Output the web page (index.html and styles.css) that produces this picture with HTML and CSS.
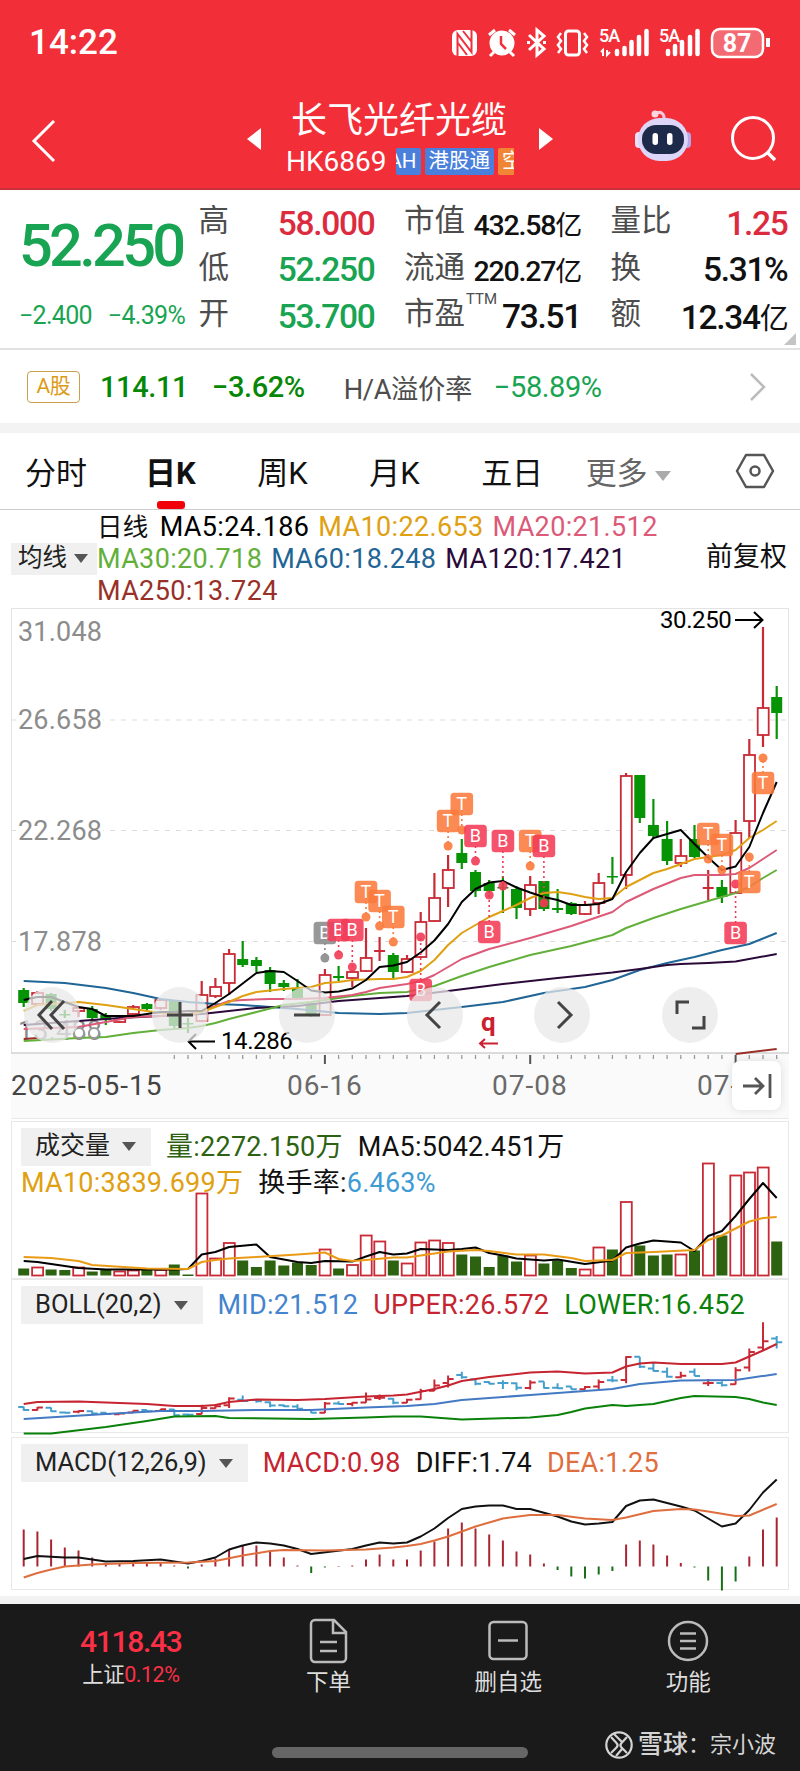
FILE: index.html
```
<!DOCTYPE html>
<html lang="zh-CN">
<head>
    <meta charset="UTF-8">
    <meta name="viewport" content="width=device-width, initial-scale=1.0">
    <title>长飞光纤光缆 HK6869</title>
    <link rel="stylesheet" href="styles.css">
</head>
<body>
    <header class="header">
        <div class="status-bar">
            <span class="clock">14:22</span>
            <svg class="status-icons" width="324" height="36" viewBox="448 25 324 36">
                <!-- NFC -->
                <rect x="452" y="30" width="25" height="26" rx="6" fill="#fff"/>
                <path d="M457.500 56V34l14 18V30M463 31l8 10M458 43l9 12" stroke="#f0303a" stroke-width="2" fill="none"/>
                <!-- alarm -->
                <circle cx="502" cy="43" r="12.500" fill="#fff"/>
                <path d="M489 35l6-5M515 35l-6-5M494 52l-4 4M510 52l4 4" stroke="#fff" stroke-width="3"/>
                <path d="M501 36v8l5 5" stroke="#f0303a" stroke-width="2.500" fill="none"/>
                <!-- bluetooth -->
                <path d="M529 35l15 14-7 6V30l7 6-15 14M527 42.500h3M543 42.500h3" stroke="#fff" stroke-width="3" fill="none"/>
                <!-- vibrate -->
                <rect x="565.500" y="31" width="14" height="24" rx="3" stroke="#fff" stroke-width="3" fill="none"/>
                <path d="M561 33l-3 4 3 4-3 4 3 4-3 4M584 33l3 4-3 4 3 4-3 4 3 4" stroke="#fff" stroke-width="2.500" fill="none"/>
                <!-- signal -->
                <text x="599" y="42" class="net">5A</text>
                <text x="659" y="42" class="net">5A</text>
                <path d="M603 56v-6l-2 2M607 50v5l3-3" stroke="#fff" stroke-width="2" fill="none"/>
                <path d="M617 54v-3M624.500 54v-6M631.500 54V42M639 54V37M646.500 54V31M668 54v-3M675 54v-8M682 54V42M690 54V37M697.500 54V31" stroke="#fff" stroke-width="4.500" stroke-linecap="round"/>
                <!-- battery -->
                <rect x="712" y="29" width="51" height="28" rx="8" fill="#f46a72" stroke="#fff" stroke-width="2.500"/>
                <path d="M768 38v9" stroke="#fff" stroke-width="4"/>
                <text x="737" y="52" class="battery">87</text>
            </svg>
        </div>
        <div class="title-bar">
            <svg class="back" width="26" height="44" viewBox="0 0 26 44"><path d="M23 2L3 22l20 20" stroke="#fff" stroke-width="3" fill="none"/></svg>
            <span class="arrow-left"></span>
            <div class="stock">
                <div class="stock-name">长飞光纤光缆</div>
                <div class="stock-code">
                    <span>HK6869</span>
                    <div class="tags">
                        <span class="tag tag-ah">AH</span>
                        <span class="tag">港股通</span>
                        <span class="tag tag-orange">空</span>
                    </div>
                </div>
            </div>
            <span class="arrow-right"></span>
            <svg class="robot" width="56" height="54" viewBox="0 0 56 54">
                <path d="M20 5c6-4 10 0 9 7" stroke="#f6c9d8" stroke-width="3" fill="none"/>
                <circle cx="20" cy="5" r="3.500" fill="#fbd6dd"/>
                <rect x="0" y="23" width="8" height="16" rx="4" fill="#ece0f7"/>
                <rect x="48" y="23" width="8" height="16" rx="4" fill="#b9a5ea"/>
                <rect x="3" y="9" width="50" height="43" rx="21.500" fill="#ddd6f8"/>
                <rect x="7" y="16" width="42" height="29" rx="14" fill="#1d2a4a"/>
                <rect x="17.500" y="24" width="5.500" height="12" rx="2.700" fill="#fff"/>
                <rect x="32" y="24" width="5.500" height="12" rx="2.700" fill="#fff"/>
            </svg>
            <svg class="search" width="48" height="48" viewBox="0 0 48 48"><circle cx="23" cy="23" r="20.500" stroke="#fff" stroke-width="3" fill="none"/><path d="M37 37l8 8" stroke="#fff" stroke-width="3.500"/></svg>
        </div>
    </header>

    <section class="quote">
        <div class="quote-price">
            <div class="price">52.250</div>
            <div class="change"><span>−2.400</span><span>−4.39%</span></div>
        </div>
        <dl class="stats">
            <div><dt>高</dt><dd class="red">58.000</dd></div>
            <div><dt>低</dt><dd class="green">52.250</dd></div>
            <div><dt>开</dt><dd class="green">53.700</dd></div>
        </dl>
        <dl class="stats">
            <div><dt>市值</dt><dd class="small">432.58<span>亿</span></dd></div>
            <div><dt>流通</dt><dd class="small">220.27<span>亿</span></dd></div>
            <div><dt>市盈<sup>TTM</sup></dt><dd>73.51</dd></div>
        </dl>
        <dl class="stats">
            <div><dt>量比</dt><dd class="red">1.25</dd></div>
            <div><dt>换</dt><dd>5.31%</dd></div>
            <div><dt>额</dt><dd>12.34<span>亿</span></dd></div>
        </dl>
    </section>

    <section class="a-share">
        <span class="a-tag">A股</span>
        <span class="a-price">114.11</span>
        <span class="a-change">−3.62%</span>
        <span class="a-label">H/A溢价率</span>
        <span class="a-premium">−58.89%</span>
        <svg class="more-arrow" width="18" height="30" viewBox="0 0 18 30"><path d="M2 2l13 13L2 28" stroke="#bbb" stroke-width="2.500" fill="none"/></svg>
    </section>

    <nav class="tabs">
        <span>分时</span>
        <span class="active">日K</span>
        <span>周K</span>
        <span>月K</span>
        <span>五日</span>
        <span class="more">更多<i class="caret"></i></span>
        <svg width="40" height="36" viewBox="0 0 40 36"><path d="M11 2h18l9 16-9 16H11L2 18z" stroke="#555" stroke-width="2.500" stroke-linejoin="round" fill="none"/><circle cx="20" cy="18" r="4.500" stroke="#555" stroke-width="2.500" fill="none"/></svg>
    </nav>

    <section class="ma-legend">
        <div class="select ma-select">均线<i class="caret"></i></div>
        <div class="ma-values">
            <div><span>日线</span><span class="ma5">MA5:24.186</span><span class="ma10">MA10:22.653</span><span class="ma20">MA20:21.512</span></div>
            <div><span class="ma30">MA30:20.718</span><span class="ma60">MA60:18.248</span><span class="ma120">MA120:17.421</span></div>
            <div><span class="ma250">MA250:13.724</span></div>
        </div>
        <div class="adjust">前复权</div>
    </section>

    <section class="kline">
        <svg id="kline" width="800" height="457" viewBox="0 608 800 457"></svg>
        <div class="tools">
            <span><svg width="56" height="56"><path d="M28 14L15 28l13 14M40 14L27 28l13 14"/></svg></span>
            <span><svg width="56" height="56"><path d="M15 28h26M28 15v26"/></svg></span>
            <span><svg width="56" height="56"><path d="M15 28h26"/></svg></span>
            <span><svg width="56" height="56"><path d="M33 15L20 28l13 13"/></svg></span>
            <span><svg width="56" height="56"><path d="M24 15l13 13-13 13"/></svg></span>
            <span><svg width="56" height="56"><path d="M15 27V15h12M30 41h12V29"/></svg></span>
        </div>
    </section>
    <div class="axis">
        <span class="date-start">2025-05-15</span>
        <span class="date-mid">06-16</span>
        <span class="date-mid2">07-08</span>
        <span class="date-end">07-</span>
        <div class="to-end"><svg width="30" height="28" viewBox="0 0 30 28"><path d="M1 14h20M13 6l8 8-8 8M28 2v24" stroke="#555" stroke-width="2.800" fill="none"/></svg></div>
    </div>

    <section class="panel volume">
        <div class="legend">
            <div class="select">成交量<i class="caret"></i></div>
            <span class="vol">量:2272.150万</span><span>MA5:5042.451万</span>
        </div>
        <div class="legend second"><span class="ma10">MA10:3839.699万</span><span>换手率:<b>6.463%</b></span></div>
        <svg id="volume" width="800" height="158" viewBox="0 1120 800 158"></svg>
    </section>

    <section class="panel boll">
        <div class="legend">
            <div class="select">BOLL(20,2)<i class="caret"></i></div>
            <span class="mid">MID:21.512</span><span class="upper">UPPER:26.572</span><span class="lower">LOWER:16.452</span>
        </div>
        <svg id="boll" width="800" height="158" viewBox="0 1278 800 158"></svg>
    </section>

    <section class="panel macd">
        <div class="legend">
            <div class="select">MACD(12,26,9)<i class="caret"></i></div>
            <span class="upper">MACD:0.98</span><span>DIFF:1.74</span><span class="dea">DEA:1.25</span>
        </div>
        <svg id="macd" width="800" height="158" viewBox="0 1436 800 158"></svg>
    </section>

    <footer class="footer">
        <div class="menu">
            <div class="index">
                <div class="index-value">4118.43</div>
                <div class="index-name">上证<span>0.12%</span></div>
            </div>
            <div class="menu-item">
                <svg width="44" height="46" viewBox="0 0 44 46"><path d="M8 2h19l12 12v26a4 4 0 0 1-4 4H8a4 4 0 0 1-4-4V6a4 4 0 0 1 4-4zM26 2v13h13M13 24h17M13 33h17"/></svg>
                下单
            </div>
            <div class="menu-item">
                <svg width="44" height="46" viewBox="0 0 44 46"><rect x="3.500" y="4" width="37" height="37" rx="4"/><path d="M12 22.500h20"/></svg>
                删自选
            </div>
            <div class="menu-item">
                <svg width="44" height="46" viewBox="0 0 44 46"><circle cx="22" cy="23" r="19"/><path d="M14 15.500h16M14 23h16M14 30.500h16"/></svg>
                功能
            </div>
        </div>
        <div class="home-bar"></div>
        <div class="watermark">
            <svg width="28" height="28" viewBox="0 0 28 28"><circle cx="14" cy="14" r="12.700"/><path d="M6 6l5.500 6c1.500 1.500 1.500 3 0 4.500L6 22M22 6l-5.500 6c-1.500 1.500-1.500 3 0 4.500L22 22M9 3l8 8M11 25l6-7"/></svg>
            <b>雪球</b>：宗小波
        </div>
    </footer>

    <script src="chart.js"></script>
</body>
</html>
```
FILE: styles.css
```
* {
    box-sizing: border-box;
}

body {
    margin: 0;
    width: 800px;
    height: 1771px;
    overflow: hidden;
    background: #fff;
    color: #111;
    font-family: Roboto, "Noto Sans CJK SC", sans-serif;
    font-size: 27px;
    white-space: nowrap;
}

.header {
    height: 190px;
    background: #f22f38;
    border-bottom: 2px solid #c9303a;
    color: #fff;
}

.status-bar {
    height: 85px;
    padding: 0 28px 0 29px;
    display: flex;
    justify-content: space-between;
    align-items: center;
}

.clock {
    font-size: 35px;
    font-weight: 500;
}

.net {
    fill: #fff;
    font-size: 18px;
    font-weight: 500;
    letter-spacing: -1px;
}

.battery {
    fill: #fff;
    font-size: 25px;
    font-weight: 700;
    text-anchor: middle;
}

.title-bar {
    height: 103px;
    padding: 0 22px 0 31px;
    display: flex;
    align-items: center;
}

.back {
    margin-top: 8px;
}

.arrow-left,
.arrow-right {
    border: 11px solid transparent;
    margin-top: 5px;
}

.arrow-left {
    border-right: 14px solid #fff;
    border-left: 0;
    margin-left: 190px;
}

.arrow-right {
    border-left: 14px solid #fff;
    border-right: 0;
    margin-left: 24px;
}

.stock {
    width: 229px;
    margin-left: 25px;
}

.stock-name {
    font-size: 36px;
    line-height: 50px;
    padding-left: 5px;
}

.stock-code {
    display: flex;
    align-items: center;
    font-size: 28px;
    line-height: 32px;
}

.tags {
    display: flex;
    gap: 4px;
    width: 118px;
    margin-left: 9px;
    overflow: hidden;
}

.tag {
    flex: none;
    height: 27px;
    padding: 0 4px;
    border-radius: 2px;
    background: #4a7fdc;
    font-size: 20.500px;
    line-height: 26px;
}

.tag-ah {
    width: 25px;
    display: flex;
    justify-content: flex-end;
}

.tag-orange {
    background: #ef8535;
}

.robot {
    margin: 0 0 2px 82px;
}

.search {
    margin-left: auto;
    margin-top: 4px;
}

.quote {
    position: relative;
    height: 160px;
    padding: 10px 12px 0 19px;
    display: grid;
    grid-template-columns: 150px 176px 177px 177px;
    column-gap: 29.500px;
    border-bottom: 2px solid #e2e2e2;
}

.quote::after {
    content: "";
    position: absolute;
    right: 4px;
    bottom: 3px;
    border-left: 12px solid transparent;
    border-bottom: 12px solid #c4c4c4;
}

.stats {
    margin: 0;
}

.stats div {
    height: 46.500px;
    display: flex;
    align-items: center;
    justify-content: space-between;
}

.stats dt {
    position: relative;
    color: #4d4d4d;
    font-size: 30.500px;
    line-height: 46px;
    margin-top: -4px;
}

.stats sup {
    position: absolute;
    top: 1px;
    left: 62px;
    font-size: 15px;
    line-height: 15px;
}

.stats dd {
    margin: 0;
    font-size: 33.500px;
    font-weight: 500;
    letter-spacing: -1.300px;
}

.stats dd span {
    font-weight: 400;
    font-size: 29px;
}

.stats dd.small {
    font-size: 28.500px;
    letter-spacing: -1.200px;
}

.stats dd.small span {
    font-size: 27px;
}

.quote .stats:first-of-type {
    margin-left: 0;
}

.quote-price {
    color: #18a452;
}

.price {
    font-size: 59.500px;
    font-weight: 500;
    letter-spacing: -3.700px;
    line-height: 92px;
}

.change {
    display: flex;
    justify-content: space-between;
    width: 166px;
    margin-top: 8px;
    font-size: 25px;
    letter-spacing: -0.700px;
    line-height: 32px;
}

.stats dd.red {
    color: #dc2b3e;
}

.stats dd.green {
    color: #18a452;
}

.a-share {
    height: 73px;
    display: flex;
    align-items: center;
    padding: 0 33px 0 27px;
    font-size: 29px;
    letter-spacing: -0.400px;
}

.a-tag {
    width: 53px;
    height: 32px;
    border: 1px solid #c9a04c;
    border-radius: 4px;
    color: #dc9a17;
    font-size: 21px;
    line-height: 29px;
    text-align: center;
}

.a-price {
    margin-left: 20px;
    width: 112px;
}

.a-price,
.a-change {
    color: #078707;
    font-weight: 500;
}

.a-label {
    margin-left: 39px;
    color: #4d4d4d;
    font-size: 27.300px;
}

.a-premium {
    margin-left: 22px;
    color: #18a452;
}

.more-arrow {
    margin-left: auto;
}

.tabs {
    height: 87px;
    padding: 0 25px;
    display: flex;
    align-items: center;
    border-top: 10px solid #f3f3f3;
    border-bottom: 1px solid #ccc;
    font-size: 31px;
}

.tabs span {
    height: 76px;
    line-height: 81px;
    margin-right: 61.500px;
    flex: none;
}

.tabs span:first-child {
    margin-right: 58px;
}

.tabs .active {
    position: relative;
    font-weight: 700;
}

.tabs .active::after {
    content: "";
    position: absolute;
    left: 12px;
    bottom: 0;
    width: 28px;
    height: 8px;
    border-radius: 3px;
    background: #f20009;
}

.tabs .more {
    margin-right: auto;
    margin-left: -19px;
    color: #666;
}

.caret {
    display: inline-block;
    border: 7px solid transparent;
    border-top: 9px solid #555;
    border-bottom: 0;
    vertical-align: 3px;
    margin-left: 12px;
}

.tabs .caret {
    border-width: 10px 8px 0;
    border-top-color: #aaa;
    margin-left: 7px;
}

.select {
    background: #f0f0f0;
    color: #222;
}

.ma-legend {
    height: 98px;
    padding: 0 13px 0 11px;
    display: flex;
    align-items: center;
}

.ma-select {
    width: 86px;
    height: 32px;
    padding-left: 7px;
    font-size: 24.500px;
    line-height: 30px;
}

.ma-select .caret {
    margin-left: 7px;
}

.ma-values div {
    display: flex;
    gap: 9px;
    line-height: 32px;
    letter-spacing: 0.350px;
}

.ma-values div:first-child span:first-child {
    font-size: 25.500px;
    margin-right: 2px;
}

.adjust {
    margin-left: auto;
    line-height: 30px;
    margin-top: -5px;
}

.ma5 { color: #000; }
.ma10 { color: #dfa012; }
.ma20 { color: #dc5a78; }
.ma30 { color: #62b03a; }
.ma60 { color: #1f6596; }
.ma120 { color: #2b0a3a; }
.ma250 { color: #983028; }
.vol { color: #2d6210; }
.mid { color: #4484cf; }
.upper { color: #c52430; }
.lower { color: #0a810a; }
.dea { color: #df6e3e; }

.kline {
    position: relative;
    height: 445px;
}

.kline svg {
    display: block;
}

#kline text {
    font-size: 27px;
    fill: #8c8c8c;
    letter-spacing: 0.200px;
}

#kline .peak {
    font-size: 24px;
    fill: #000;
    letter-spacing: -0.400px;
}

#kline .badge {
    font-size: 18px;
    font-weight: 400;
    fill: #fff;
    text-anchor: middle;
}

#kline .event {
    font-size: 26px;
    font-weight: 700;
    fill: #cb2030;
}

.tools {
    position: absolute;
    left: 24px;
    bottom: 10px;
    display: flex;
    gap: 71.500px;
}

.tools span {
    width: 56px;
    height: 56px;
    border-radius: 50%;
    background: rgba(232, 232, 232, 0.75);
}

.tools path {
    fill: none;
    stroke: #444;
    stroke-width: 3;
}

.axis {
    height: 66px;
    margin: 0 11px;
    background: #fafafa;
    border-bottom: 1px solid #e8e8e8;
    display: flex;
    align-items: center;
    color: #6a6a6a;
    font-size: 28px;
    letter-spacing: 1px;
}

.axis span {
    flex: none;
}

.date-start {
    width: 276px;
    color: #444;
}

.date-mid {
    width: 205px;
}

.date-mid2 {
    width: 205px;
}

.date-end {
    width: 33px;
}

.to-end {
    position: relative;
    width: 49px;
    height: 49px;
    margin-left: 2px;
    border-radius: 8px;
    background: #fff;
    box-shadow: 0 0 8px rgba(0, 0, 0, 0.12);
    display: flex;
    align-items: center;
    justify-content: center;
}

.panel {
    position: relative;
    height: 154px;
    margin: 0 11px 4px;
    border: 1px solid #e8e8e8;
}

.panel svg {
    position: absolute;
    left: -12px;
    top: -2px;
}

.volume {
    height: 158px;
    margin: 2px 11px 0;
}

.legend {
    display: flex;
    align-items: center;
    height: 38px;
    margin: 6px 0 0 9px;
    gap: 15px;
    letter-spacing: 0.250px;
}

.legend .select {
    height: 38px;
    padding: 0 15px 0 14px;
    font-size: 25.500px;
    line-height: 36px;
    letter-spacing: 0;
}

.legend .caret {
    margin-left: 12px;
}

.volume .select {
    font-size: 25px;
}

.volume span {
    margin-top: -5px;
}

.second {
    height: 36px;
    margin-top: -1px;
}

.second b {
    color: #3f9bd2;
    font-weight: 400;
}

.macd {
    height: 153px;
    margin-bottom: 6px;
}

.footer {
    position: relative;
    height: 176px;
    border-top: 8px solid #f3f3f3;
    background: #1a1a1a;
}

.menu {
    display: flex;
    padding: 14px 22px 0 23px;
    color: #ddd;
}

.index {
    width: 216px;
    padding-top: 7px;
    text-align: center;
}

.index-value {
    color: #fb3046;
    font-size: 30px;
    font-weight: 500;
    letter-spacing: -1.300px;
    line-height: 34px;
}

.index-name {
    font-size: 21.500px;
    line-height: 31px;
    letter-spacing: -0.500px;
}

.index-name span {
    color: #fb3046;
}

.menu-item {
    width: 180px;
    display: flex;
    flex-direction: column;
    align-items: center;
    font-size: 22.500px;
    line-height: 36px;
}

.menu-item svg {
    fill: none;
    stroke: #bbb;
    stroke-width: 2.500;
}

.home-bar {
    position: absolute;
    left: 272px;
    bottom: 14px;
    width: 256px;
    height: 11px;
    border-radius: 6px;
    background: #666;
}

.watermark {
    position: absolute;
    right: 24px;
    bottom: 10px;
    display: flex;
    align-items: center;
    color: #d4d4d4;
    font-size: 22px;
    line-height: 34px;
}

.watermark b {
    font-size: 25px;
    font-weight: 500;
    margin-left: 5px;
}

.watermark svg {
    fill: none;
    stroke: #d4d4d4;
    stroke-width: 2.200;
}
```
FILE: chart.js
```
var STEP = 13.69;
var RED = "#c92a35";
var GREEN = "#069306";

// up/down, high, body top, body bottom, low
var candles = [
    ["g", 988, 990, 1003, 1007], ["r", 991, 993, 1004, 1005], ["g", 993, 994, 1009, 1011], ["g", 1010, 1014, 1015, 1018],
    ["r", 1006, 1008, 1011, 1017], ["g", 1006, 1009, 1018, 1020], ["g", 1013, 1015, 1020, 1025], ["r", 1018, 1019, 1022, 1023],
    ["r", 1005, 1007, 1014, 1015], ["g", 1003, 1004, 1009, 1010], ["r", 999, 1000, 1008, 1010], ["g", 1000, 1001, 1026, 1028],
    ["g", 1018, 1023, 1024, 1033], ["r", 981, 995, 1021, 1022], ["r", 978, 987, 996, 998], ["r", 949, 954, 983, 995],
    ["g", 941, 959, 965, 967], ["g", 957, 960, 966, 972], ["g", 967, 970, 984, 992], ["g", 980, 983, 987, 991],
    ["g", 979, 988, 998, 1000], ["g", 1002, 1003, 1015, 1017], ["r", 969, 975, 1015, 1016], ["g", 966, 976, 978, 981],
    ["r", 970, 972, 978, 987], ["r", 928, 958, 971, 972], ["r", 937, 951, 952, 961], ["g", 953, 955, 972, 979],
    ["r", 955, 959, 972, 973], ["r", 912, 922, 957, 958], ["r", 873, 898, 921, 922], ["r", 855, 870, 888, 907],
    ["g", 839, 853, 863, 869], ["g", 870, 872, 891, 897], ["g", 880, 883, 891, 893], ["g", 876, 887, 888, 913],
    ["g", 886, 889, 908, 919], ["r", 876, 885, 909, 916], ["g", 881, 881, 909, 911], ["g", 889, 908, 910, 913],
    ["g", 902, 903, 914, 915], ["r", 901, 905, 914, 915], ["r", 873, 883, 903, 914], ["g", 857, 876, 877, 884],
    ["r", 773, 776, 875, 889], ["g", 775, 775, 818, 823], ["g", 799, 825, 836, 838], ["g", 821, 839, 861, 865],
    ["r", 839, 856, 863, 867], ["g", 825, 839, 857, 858], ["r", 870, 888, 889, 900], ["g", 880, 887, 897, 903],
    ["r", 820, 833, 893, 894], ["r", 739, 755, 821, 838], ["r", 627, 708, 735, 747], ["g", 686, 697, 713, 739]
];

var volumes = [7, 8, 6, 5.5, 8, 4, 5.5, 4, 5, 5.5, 5.5, 11, 1, 82, 17, 32.5, 15, 8.5, 15, 10, 13, 10.5, 26, 7, 10.5, 40, 34, 15,
    12, 33, 35, 32.5, 21, 19, 8.5, 20, 14, 20, 12, 15, 7.5, 6, 28, 26, 73.5, 30, 20, 21, 21, 25, 112, 40, 100, 103, 108, 34];

var macd = [37, 35, 27, 19, 16, 9, 3, 3, 3, 4, 4, 1, -2, 2, 8, 17, 21, 21, 16, 9, 1, -6.5, -1, 0.5, 1, 7, 12, 7,
    7, 16, 25, 38, 44, 38, 32, 26, 15, 12, 3, -3.5, -10, -12, -8, -4.5, 22, 26, 22, 11, 3.5, -1, -14, -24, -15, 10, 37, 49];

// letter, candle, badge y, dot y, colour
var markers = [
    ["B", 22, 933, 958, "#8a8a8a"], ["B", 23, 930, 955, "#f23b57"], ["B", 24, 930, 967, "#f23b57"],
    ["T", 25, 892, 917, "#fb7a3c"], ["T", 26, 901, 926, "#fb7a3c"], ["T", 27, 917, 942, "#fb7a3c"],
    ["B", 29, 990, 937, "#f23b57"], ["T", 31, 821, 846, "#fb7a3c"], ["T", 32, 804, 830, "#fb7a3c"],
    ["B", 33, 836, 861, "#f23b57"], ["B", 34, 932, 895, "#f23b57"], ["B", 35, 841, 886, "#f23b57"],
    ["T", 37, 841, 866, "#fb7a3c"], ["B", 38, 846, 903, "#f23b57"], ["T", 50, 834, 859, "#fb7a3c"],
    ["T", 51, 845, 870, "#fb7a3c"], ["B", 52, 933, 884, "#f23b57"], ["T", 53, 882, 857, "#fb7a3c"],
    ["T", 54, 783, 758, "#fb7a3c"]
];

function x(i) {
    return Math.round((23.7 + STEP * i) * 10) / 10;
}

function path(d, color, width, extra) {
    return '<path d="' + d + '" fill="none" stroke="' + color + '" stroke-width="' + width + '" ' + (extra || "") + '/>';
}

function line(points, color) {
    var d = points.map(function (p, n) {
        return (n ? "L" : "M") + x(p[0]) + " " + p[1];
    }).join("");
    return path(d, color, 2, 'stroke-linejoin="round"');
}

function bar(i, top, bottom, up, upColor, downColor) {
    if (!up) {
        return '<rect x="' + (x(i) - 5.5) + '" y="' + top + '" width="11" height="' + Math.max(bottom - top, 1.5) + '" fill="' + downColor + '"/>';
    }
    if (bottom - top < 2) {
        return path("M" + (x(i) - 5.5) + " " + top + "h11", upColor, 2);
    }
    return '<rect x="' + (x(i) - 5.3) + '" y="' + top + '" width="11" height="' + (bottom - top) + '" fill="#fff" stroke="' + upColor + '" stroke-width="1.8"/>';
}

function drawKline() {
    var out = path("M11.500 1053V608.500H788.500V1053", "#e3e3e3", 1) + path("M11 1053H789", "#bbb", 1);
    out += path("M11 720H789M11 830.500H789M11 941.500H789", "#ddd", 1, 'stroke-dasharray="5 6"');
    [["31.048", 641], ["26.658", 729], ["22.268", 840], ["17.878", 951], ["13.488", 1040]].forEach(function (t) {
        out += '<rect x="17" y="' + (t[1] - 20) + '" width="86" height="20" fill="#fff"/><text x="18" y="' + t[1] + '">' + t[0] + '</text>';
    });

    candles.forEach(function (c, i) {
        var color = c[0] == "r" ? RED : GREEN;
        out += path("M" + x(i) + " " + c[1] + "V" + c[4], color, 2.2);
        out += bar(i, c[2], c[3], c[0] == "r", RED, GREEN);
    });

    out += line([[0, 981], [3, 983], [6, 988], [8, 993], [10, 999], [12, 1002], [14, 1004], [16, 1005], [18, 1007], [20, 1009], [23, 1013], [26, 1014], [28, 1013], [32, 1007], [35, 1002], [38, 993], [41, 987], [43, 980], [45, 970], [47, 963], [49, 957], [51, 950], [52, 947], [53, 944], [55, 933]], "#1f6596");
    out += line([[0, 1025], [4, 1021], [7, 1018], [10, 1016], [13, 1014], [17, 1008], [20, 1006], [23, 1001], [28, 996], [31, 991], [35, 984], [39, 978], [43, 972.5], [45, 969], [47, 965], [48, 964], [50, 963], [52, 961.5], [55, 954]], "#2b0a3a");
    out += line([[0, 1041], [4, 1038], [6, 1037], [8, 1033], [10, 1030], [12, 1028], [13, 1026], [14, 1023], [15, 1019], [17, 1012], [19, 1005], [21, 1002], [22, 1000], [24, 996], [26, 993], [28, 992], [30, 986], [32, 976], [34, 967], [37, 955], [40, 946], [43, 935], [44, 928], [46, 918], [48, 909], [50, 901], [52, 893], [53, 887], [54, 878], [55, 870]], "#62b03a");
    out += line([[0, 1029], [4, 1027], [6, 1022], [8, 1017], [10, 1016], [12, 1014], [13, 1011], [14, 1006], [15, 1001], [16, 1000], [18, 999], [20, 999], [22, 998], [24, 995], [25, 992], [26, 988], [28, 984], [29, 981], [30, 975], [31, 967], [32, 959], [34, 949], [37, 938], [40, 926], [43, 912], [44, 902], [46, 889], [48, 878], [49, 875], [51, 875], [52, 874], [53, 868], [54, 859], [55, 850]], "#dc5a78");
    out += line([[0, 1011], [1, 1005], [4, 1002], [6, 1005], [8, 1009], [10, 1013], [12, 1015], [13, 1012], [14, 1007], [15, 1002], [16, 996], [17, 992], [19, 989], [20, 988], [21, 987], [22, 983], [23, 982], [24, 980], [26, 979], [27, 979], [28, 977], [29, 971], [30, 960], [31, 945], [32, 933], [33, 925], [34, 917], [35, 911], [36, 905], [37, 898], [38, 893], [39, 892], [40, 894], [41, 897], [42, 899], [43, 898], [44, 887], [45, 880], [46, 873], [47, 869], [48, 864], [49, 859], [50, 857], [51, 855], [52, 850], [53, 838], [54, 830], [55, 821]], "#dfa012");
    var ma5 = [1000, 997, 997, 1002, 1007, 1009, 1016, 1016, 1016, 1014, 1012, 1012, 1011, 1011, 1003, 994, 983.5, 973, 971, 972, 981, 990.5, 992.5, 991.5, 988.5, 980, 967, 965.5, 962, 952.5, 940.5, 924, 902, 889, 882.5, 881, 887.5, 892.5, 897, 900, 905, 905, 904, 899, 872, 853, 838, 834, 830, 844, 857.5, 870, 866.5, 847, 813, 782];
    out += line(ma5.map(function (y, i) { return [i, y]; }), "#000");
    out += line([[0, 1039], [1, 1038]], "#983028") + line([[52, 1054], [55, 1049]], "#983028");

    markers.forEach(function (m) {
        var cx = x(m[1]);
        out += path("M" + cx + " " + m[2] + "V" + m[3], m[4], 1.6, 'stroke-dasharray="2 3"');
        out += '<circle cx="' + cx + '" cy="' + m[3] + '" r="4.500" fill="' + m[4] + '" fill-opacity="0.9"/>';
        out += '<rect x="' + (cx - 11.3) + '" y="' + (m[2] - 11.3) + '" width="22.600" height="22.600" rx="3.500" fill="' + m[4] + '" fill-opacity="0.88"/>';
        out += '<text class="badge" x="' + cx + '" y="' + (m[2] + 6.3) + '">' + m[0] + '</text>';
    });

    out += '<text class="peak" x="660" y="628">30.250</text>' + path("M735 620h27M754 612l8.500 8-8.500 8", "#000", 2);
    out += '<text class="peak" x="221" y="1049">14.286</text>' + path("M215 1041.500h-26M196 1034l-7.500 7.500 7.500 7.500", "#000", 2);
    out += '<text class="event" x="481" y="1031">q</text>' + path("M498 1043.500h-18M485 1039l-5 4.500 5 4.500", "#cb2030", 2);
    // circles under the lowest axis label
    out += '<g fill="#fff" stroke="#999" stroke-width="2"><circle cx="79" cy="1033" r="5"/><circle cx="94" cy="1033" r="5"/></g>';

    for (var i = 11; i < 56; i++) {
        var major = i == 22 || i == 37 || i == 52;
        out += path("M" + x(i) + " 1055v" + (major ? 9 : 4), major ? "#555" : "#999", major ? 2 : 1.3);
    }
    document.getElementById("kline").innerHTML = out;
}

function drawVolume() {
    var out = "";
    volumes.forEach(function (v, i) {
        out += bar(i, 1275.5 - v, 1275.5, candles[i][0] == "r", RED, "#2d6210");
    });
    out += line([[0, 1261], [1, 1262], [2, 1264], [3, 1266], [4, 1268], [6, 1269.5], [11, 1269.5], [12, 1269], [13, 1254.5], [14, 1252], [15, 1247], [17, 1244.5], [18, 1257], [20, 1262], [21, 1263], [22, 1261], [24, 1261.5], [25, 1256.5], [26, 1252], [27, 1254.5], [28, 1253.5], [29, 1249], [31, 1250], [32, 1249], [33, 1247.5], [34, 1253], [35, 1255.5], [36, 1258.5], [38, 1260.5], [39, 1259.5], [41, 1264], [43, 1260.5], [44, 1247.5], [45, 1243.5], [46, 1240.5], [48, 1242.5], [49, 1251], [50, 1236], [51, 1231], [52, 1216], [53, 1199], [54, 1183], [55, 1198]], "#000");
    out += line([[0, 1257], [2, 1258], [4, 1261], [5, 1265], [9, 1268.5], [12, 1269], [13, 1262], [14, 1260], [15, 1258.5], [17, 1257], [20, 1254.5], [22, 1252.5], [23, 1259], [24, 1261], [25, 1260], [27, 1257.5], [28, 1257.5], [31, 1251.5], [33, 1250], [34, 1251], [36, 1254.5], [38, 1254.5], [40, 1258], [41, 1261], [43, 1260], [44, 1253], [46, 1252], [49, 1250], [50, 1240], [51, 1235.5], [53, 1221.5], [54, 1218], [55, 1217]], "#ea9b16");
    document.getElementById("volume").innerHTML = out;
}

function drawBoll() {
    function scale(y) {
        return Math.round((1322.3 + (y - 627) * 0.233) * 10) / 10;
    }
    var out = "";
    candles.forEach(function (c, i) {
        var up = c[0] == "r";
        var open = scale(up ? c[3] : c[2]);
        var close = scale(up ? c[2] : c[3]);
        out += path("M" + (x(i) - 5.5) + " " + open + "H" + x(i) + "M" + x(i) + " " + scale(c[1]) + "V" + scale(c[4]) + "M" + x(i) + " " + close + "h5.500", up ? RED : "#459fce", 2);
    });
    out += line([[0, 1404], [1, 1402], [4, 1401.5], [7, 1403], [9, 1404], [11, 1406], [13, 1406], [14, 1405], [15, 1402], [17, 1399.5], [20, 1400], [22, 1399], [25, 1396.5], [27, 1395.5], [28, 1394.5], [30, 1389], [31, 1385.5], [32, 1381], [34, 1377], [37, 1372.5], [39, 1371.5], [41, 1373.5], [43, 1372.5], [44, 1366.5], [45, 1363.5], [46, 1362.5], [48, 1364], [51, 1364], [52, 1362.5], [53, 1356.5], [54, 1350.5], [55, 1344]], "#c52430");
    out += line([[0, 1419], [6, 1414], [10, 1411], [13, 1411], [17, 1410], [21, 1410], [25, 1407.5], [28, 1406], [30, 1404], [32, 1400], [37, 1395], [43, 1389], [45, 1384], [48, 1380.5], [52, 1380], [55, 1374]], "#4479c4");
    out += line([[0, 1433.5], [2, 1433.5], [6, 1427], [9, 1421], [11, 1416.5], [14, 1416], [15, 1418], [21, 1419], [25, 1417.5], [27, 1416.5], [29, 1416.5], [32, 1419.5], [37, 1417.5], [39, 1415], [40, 1412], [41, 1408.5], [43, 1405], [44, 1406], [46, 1404], [48, 1398], [49, 1396], [52, 1397], [53, 1399], [54, 1402.5], [55, 1405]], "#0a810a");
    document.getElementById("boll").innerHTML = out;
}

function drawMacd() {
    var out = "";
    macd.forEach(function (v, i) {
        out += path("M" + x(i) + " 1566.500v" + (-v), v > 0 ? "#a82632" : "#176f17", 2);
    });
    out += line([[0, 1559], [1, 1556], [3, 1557.5], [4, 1557.5], [6, 1561.5], [8, 1561], [10, 1559.5], [12, 1563.5], [13, 1561], [14, 1557.5], [15, 1549.5], [16, 1545.5], [17, 1542.5], [18, 1543.5], [19, 1545.5], [20, 1549], [21, 1554], [24, 1549], [25, 1545.5], [26, 1542.5], [27, 1543.5], [28, 1542.5], [29, 1536.5], [30, 1528.5], [31, 1518], [32, 1509], [33, 1506.5], [34, 1505.5], [35, 1505.5], [36, 1509], [37, 1509], [39, 1516.5], [40, 1521.5], [41, 1524.5], [42, 1523.5], [43, 1522], [44, 1506], [45, 1500.5], [46, 1499.5], [48, 1506.5], [49, 1510.5], [50, 1518.5], [51, 1526.5], [52, 1523.5], [53, 1510], [54, 1492.5], [55, 1479.5]], "#111");
    out += line([[0, 1577.5], [1, 1573], [2, 1569.5], [3, 1566.5], [5, 1564.5], [8, 1563], [12, 1562.5], [14, 1561], [16, 1555.5], [18, 1551], [19, 1550], [22, 1550.5], [25, 1549.5], [27, 1547.5], [28, 1546], [29, 1544], [30, 1540.5], [31, 1536.5], [33, 1526.5], [35, 1518.5], [37, 1515], [39, 1515], [41, 1518.5], [43, 1520], [44, 1517.5], [46, 1511], [48, 1509], [49, 1509.5], [50, 1511.5], [52, 1516], [53, 1515.5], [55, 1504]], "#df6e3e");
    document.getElementById("macd").innerHTML = out;
}

drawKline();
drawVolume();
drawBoll();
drawMacd();
```
